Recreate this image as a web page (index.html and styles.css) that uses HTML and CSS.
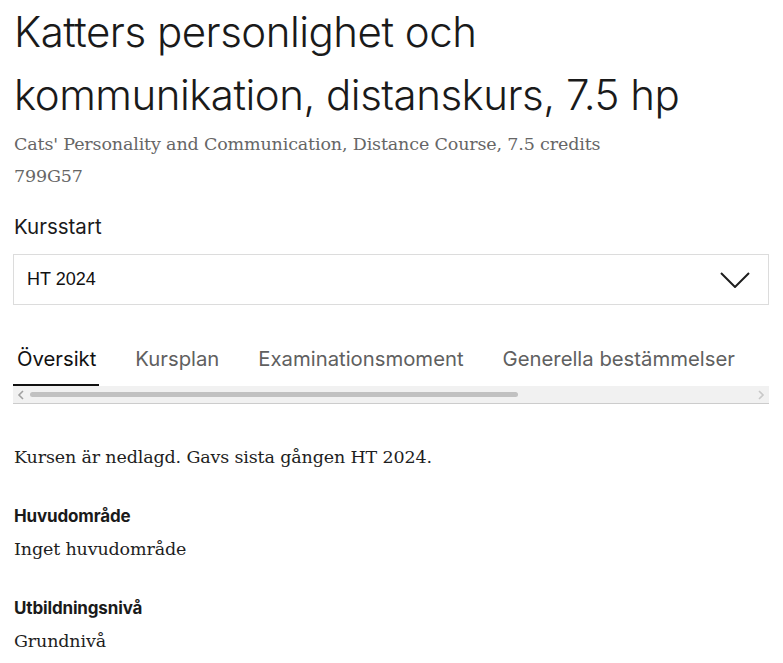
FILE: index.html
```html
<!DOCTYPE html>
<html lang="sv">
<head>
<meta charset="utf-8">
<title>Katters personlighet och kommunikation</title>
<link rel="stylesheet" href="styles.css">
</head>
<body>
<main class="page">
  <h1 class="title">Katters personlighet och kommunikation, distanskurs, 7.5 hp</h1>
  <p class="subtitle">Cats' Personality and Communication, Distance Course, 7.5 credits<br>799G57</p>

  <div class="label">Kursstart</div>
  <div class="select">
    <span class="select-value">HT 2024</span>
    <svg class="chevron" width="30" height="16" viewBox="0 0 30 16" aria-hidden="true">
      <polyline points="1,1 15,15 29,1" fill="none" stroke="#1e1e1e" stroke-width="2"/>
    </svg>
  </div>

  <nav class="tabs">
    <div class="tab-list">
      <span class="tab active">Översikt</span>
      <span class="tab">Kursplan</span>
      <span class="tab">Examinationsmoment</span>
      <span class="tab">Generella bestämmelser</span>
    </div>
    <div class="scrollbar">
      <svg class="arrow" width="8" height="10" viewBox="0 0 8 10" aria-hidden="true"><polyline points="6,1 2,5 6,9" fill="none" stroke="#a0a0a0" stroke-width="1.6"/></svg>
      <div class="track"><div class="thumb"></div></div>
      <svg class="arrow" width="8" height="10" viewBox="0 0 8 10" aria-hidden="true"><polyline points="2,1 6,5 2,9" fill="none" stroke="#c8c8c8" stroke-width="1.6"/></svg>
    </div>
  </nav>

  <p class="text notice">Kursen är nedlagd. Gavs sista gången HT 2024.</p>

  <h3 class="field-title">Huvudområde</h3>
  <p class="text field-value">Inget huvudområde</p>

  <h3 class="field-title">Utbildningsnivå</h3>
  <p class="text field-value">Grundnivå</p>
</main>
</body>
</html>
```

FILE: styles.css
```css
html, body {
  margin: 0;
  padding: 0;
  background: #ffffff;
}

.page {
  padding: 0 14px 0 13px;
  font-family: Inter, "Noto Sans", sans-serif;
  color: #1a1a1a;
}

.title {
  margin: 0 0 0 1px;
  font-size: 42px;
  line-height: 63px;
  font-weight: 300;
  letter-spacing: -0.5px;
  color: #1a1a1a;
}

.subtitle {
  margin: 2px 0 0 1px;
  font-family: "DejaVu Serif", Georgia, serif;
  font-size: 17.5px;
  line-height: 32px;
  letter-spacing: -0.15px;
  color: #666666;
}

.label {
  margin: 21px 0 0 1px;
  font-size: 20.5px;
  line-height: 28px;
  color: #1a1a1a;
}

.select {
  margin-top: 13px;
  height: 49px;
  border: 1px solid #dcdcdc;
  display: flex;
  align-items: center;
  justify-content: space-between;
  padding: 0 18px 0 13px;
}

.select-value {
  font-family: "Liberation Sans", Arial, sans-serif;
  font-size: 18px;
  color: #111111;
}

.chevron {
  display: block;
}

.tabs {
  margin-top: 40px;
}

.tab-list {
  display: flex;
  gap: 32px;
}

.tab {
  padding: 0 3px 11px 4px;
  font-size: 20.3px;
  line-height: 28px;
  color: #606060;
  border-bottom: 2px solid transparent;
  white-space: nowrap;
}

.tab.active {
  color: #111111;
  border-bottom-color: #111111;
}

.scrollbar {
  height: 17px;
  background: #f1f1f1;
  border-bottom: 1px solid #cccccc;
  display: flex;
  align-items: center;
  padding: 0 4px;
  gap: 5px;
}

.arrow {
  display: block;
  flex: none;
}

.track {
  flex: 1;
  height: 5px;
}

.thumb {
  width: 488px;
  height: 5px;
  border-radius: 3px;
  background: #c1c1c1;
}

.text {
  font-family: "DejaVu Serif", Georgia, serif;
  font-size: 17.5px;
  line-height: 32px;
  letter-spacing: -0.15px;
  color: #1e1e1e;
  margin: 0 0 0 1px;
}

.notice {
  margin-top: 37px;
}

.field-title {
  margin: 31px 0 0 1px;
  font-size: 17px;
  line-height: 24px;
  font-weight: 700;
  letter-spacing: -0.15px;
  color: #1a1a1a;
}

.field-value {
  margin-top: 5px;
}
```
